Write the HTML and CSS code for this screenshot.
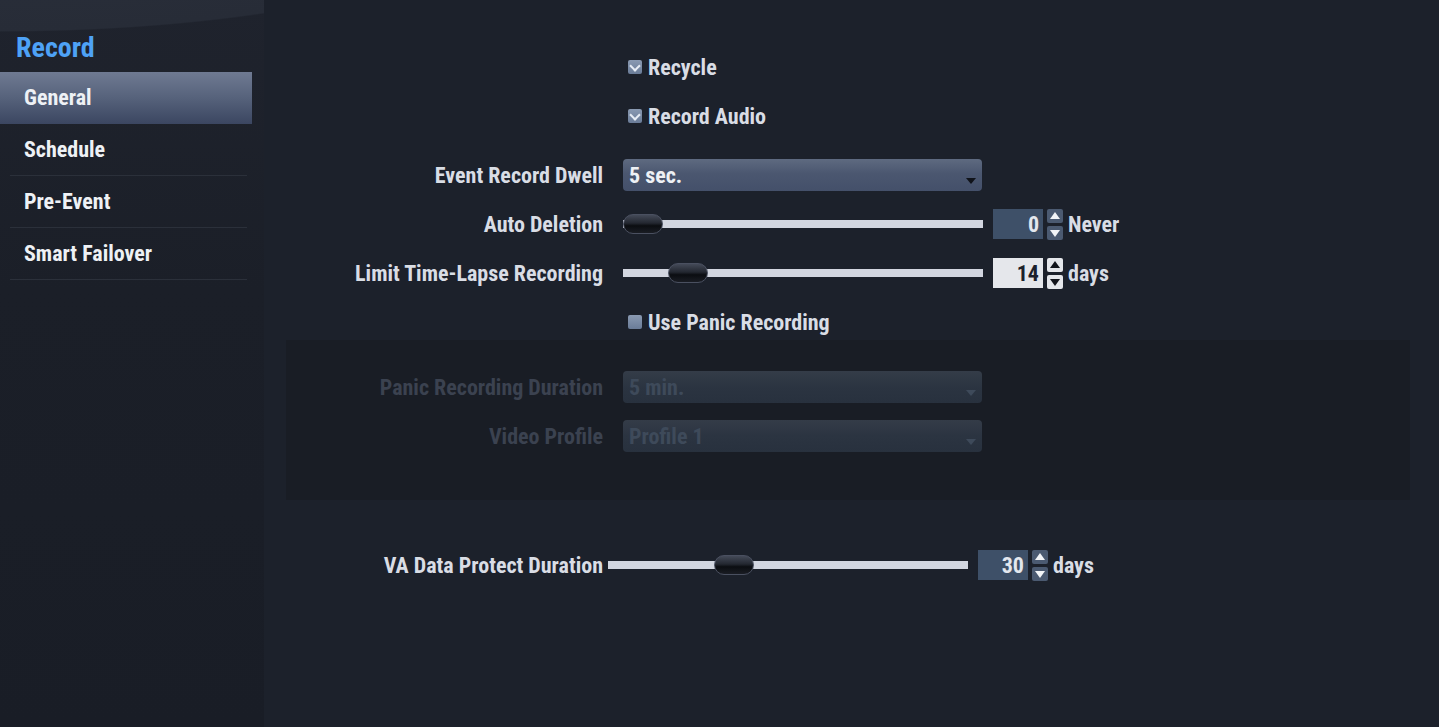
FILE: index.html
```html
<!DOCTYPE html>
<html>
<head>
<meta charset="utf-8">
<link rel="stylesheet" href="styles.css">
</head>
<body>
<div class="app">
  <aside class="sidebar">
    <h1 class="title">Record</h1>
    <nav class="nav">
      <div class="nav-item active">General</div>
      <div class="nav-item">Schedule</div>
      <div class="nav-item">Pre-Event</div>
      <div class="nav-item">Smart Failover</div>
    </nav>
  </aside>
  <main class="main">
    <div class="row first">
      <div class="label"></div>
      <div class="control"><span class="check checked"></span><span class="text">Recycle</span></div>
    </div>
    <div class="row">
      <div class="label"></div>
      <div class="control"><span class="check checked"></span><span class="text">Record Audio</span></div>
    </div>
    <div class="row gap-lg">
      <div class="label">Event Record Dwell</div>
      <div class="control"><div class="select"><span>5 sec.</span><i class="arrow"></i></div></div>
    </div>
    <div class="row">
      <div class="label">Auto Deletion</div>
      <div class="control">
        <div class="slider"><div class="track"></div><div class="thumb" style="left:0px"></div></div>
        <div class="num">0</div>
        <div class="spin"><span class="up"></span><span class="down"></span></div>
        <span class="unit">Never</span>
      </div>
    </div>
    <div class="row">
      <div class="label">Limit Time-Lapse Recording</div>
      <div class="control">
        <div class="slider"><div class="track"></div><div class="thumb" style="left:45px"></div></div>
        <div class="num light">14</div>
        <div class="spin light"><span class="up"></span><span class="down"></span></div>
        <span class="unit">days</span>
      </div>
    </div>
    <div class="row">
      <div class="label"></div>
      <div class="control"><span class="check"></span><span class="text">Use Panic Recording</span></div>
    </div>
    <section class="panel">
      <div class="row dim">
        <div class="label">Panic Recording Duration</div>
        <div class="control"><div class="select"><span>5 min.</span><i class="arrow"></i></div></div>
      </div>
      <div class="row dim">
        <div class="label">Video Profile</div>
        <div class="control"><div class="select"><span>Profile 1</span><i class="arrow"></i></div></div>
      </div>
    </section>
    <div class="row va">
      <div class="label">VA Data Protect Duration</div>
      <div class="control">
        <div class="slider"><div class="track"></div><div class="thumb" style="left:106px"></div></div>
        <div class="num">30</div>
        <div class="spin"><span class="up"></span><span class="down"></span></div>
        <span class="unit">days</span>
      </div>
    </div>
  </main>
</div>
</body>
</html>
```
FILE: styles.css
```css
* { box-sizing: border-box; }
html, body { margin: 0; padding: 0; }
body {
  width: 1439px;
  height: 727px;
  overflow: hidden;
  background: #1c212b;
  font-family: "Liberation Sans Narrow", "Roboto Condensed", "Roboto", sans-serif;
  font-weight: bold;
  font-size: 22px;
  color: #d9dde5;
}
.app { display: flex; height: 727px; }

.sidebar {
  width: 264px;
  flex: none;
  background:
    radial-gradient(520px 130px at 0 -98px, #2b303c 0%, #272c37 99%, rgba(39,44,55,0) 100%),
    linear-gradient(180deg, #1f232d 0%, #1b1f28 40%, #191d26 100%);
}
.title {
  margin: 0;
  padding: 32px 0 0 16px;
  height: 72px;
  font-size: 28px;
  line-height: 32px;
  font-weight: bold;
  color: #4ea2f6;
}
.nav { display: flex; flex-direction: column; width: 252px; }
.nav-item {
  height: 52px;
  line-height: 52px;
  padding-left: 24px;
  color: #eef1f5;
  font-size: 22px;
  border-bottom: 1px solid #2b303a;
  margin: 0 5px 0 10px;
  padding-left: 14px;
}
.nav-item.active {
  margin: 0;
  padding-left: 24px;
  border-bottom: 0;
  background: linear-gradient(180deg, #6f7a92 0%, #56627b 50%, #3b4661 100%);
}

.main {
  flex: 1;
  padding-top: 51px;
  display: flex;
  flex-direction: column;
}
.row {
  display: flex;
  align-items: center;
  height: 32px;
  margin-bottom: 17px;
}
.row.gap-lg { margin-top: 10px; }
.label {
  width: 339px;
  flex: none;
  text-align: right;
  white-space: nowrap;
}
.control {
  margin-left: 20px;
  display: flex;
  align-items: center;
  height: 32px;
}
.text { margin-left: 6px; }
.check {
  width: 14px;
  height: 14px;
  margin-left: 5px;
  border-radius: 2px;
  background: linear-gradient(180deg, #8a9ab2 0%, #6a7c98 100%);
  position: relative;
}
.check.checked::after {
  content: "";
  position: absolute;
  left: 3px;
  top: 2px;
  width: 6px;
  height: 6px;
  border-right: 2px solid #e6ecf4;
  border-bottom: 2px solid #e6ecf4;
  transform: rotate(45deg);
}
.select {
  width: 359px;
  height: 32px;
  border-radius: 4px;
  background: linear-gradient(180deg, #5e6a80 0%, #4b5770 45%, #44506a 100%);
  display: flex;
  align-items: center;
  padding-left: 6px;
  position: relative;
  color: #eef1f5;
}
.arrow {
  position: absolute;
  right: 6px;
  bottom: 7px;
  width: 0;
  height: 0;
  border-left: 5px solid transparent;
  border-right: 5px solid transparent;
  border-top: 6px solid #10131a;
}
.slider {
  position: relative;
  width: 360px;
  height: 20px;
}
.track {
  position: absolute;
  left: 0;
  right: 0;
  top: 6px;
  height: 8px;
  background: #d2d6e0;
}
.thumb {
  position: absolute;
  top: 0;
  width: 40px;
  height: 20px;
  border-radius: 10px;
  border: 1px solid #4a5060;
  background: linear-gradient(180deg, #444a58 0%, #232730 45%, #0b0d11 60%, #1a1d24 100%);
}
.num {
  width: 50px;
  height: 30px;
  margin-left: 10px;
  background: #3e5068;
  color: #e3e7ee;
  text-align: right;
  padding-right: 4px;
  line-height: 31px;
}
.num.light { background: #e5e7eb; color: #1c212b; }
.spin {
  margin-left: 4px;
  display: flex;
  flex-direction: column;
  gap: 3px;
}
.spin span {
  width: 16px;
  height: 14px;
  border-radius: 2px;
  background: #4b5a71;
  position: relative;
}
.spin span::after {
  content: "";
  position: absolute;
  left: 3px;
  width: 0;
  height: 0;
  border-left: 5px solid transparent;
  border-right: 5px solid transparent;
}
.spin .up::after { top: 3px; border-bottom: 7px solid #f2f4f7; }
.spin .down::after { top: 4px; border-top: 7px solid #f2f4f7; }
.spin.light span { background: #e5e7eb; }
.spin.light .up::after { border-bottom-color: #12151b; }
.spin.light .down::after { border-top-color: #12151b; }
.unit { margin-left: 5px; }

.panel {
  margin: -15px 29px 0 22px;
  height: 160px;
  flex: none;
  background: #191d25;
  padding-top: 31px;
}
.panel .label { width: 317px; }
.row.dim { color: #3b4250; }
.row.dim .select {
  background: linear-gradient(180deg, #343c48 0%, #2b3441 50%, #28313e 100%);
  color: #3e4a5a;
}
.row.dim .arrow { border-top-color: #3e4a5a; }

.row.va { margin-top: 49px; }
.row.va .control { margin-left: 5px; }
```
